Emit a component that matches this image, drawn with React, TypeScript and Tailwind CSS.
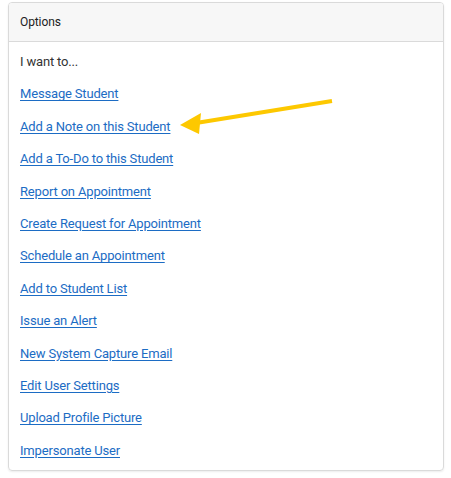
const links = [
  'Message Student',
  'Add a Note on this Student',
  'Add a To-Do to this Student',
  'Report on Appointment',
  'Create Request for Appointment',
  'Schedule an Appointment',
  'Add to Student List',
  'Issue an Alert',
  'New System Capture Email',
  'Edit User Settings',
  'Upload Profile Picture',
  'Impersonate User',
];

export default function App() {
  return (
    <div className="relative h-[478px] w-[451px] bg-white pt-[2px] font-['Roboto',sans-serif]">
      <div className="ml-[8px] w-[436px] overflow-hidden rounded-[4px] border border-[#dadada] shadow-[0_1px_2px_rgba(0,0,0,0.08)]">
        <div className="flex h-[39px] items-center border-b border-[#dadada] bg-[#f7f7f7] px-[11px] text-[12px] tracking-[-0.1px] text-[#222]">
          Options
        </div>
        <div className="flex flex-col gap-[12.4px] px-[11px] pb-[9px] pt-[10px] text-[13px] leading-[20px] tracking-[-0.17px]">
          <div className="text-[#333]">I want to...</div>
          {links.map((l) => (
            <div key={l}>
              <a href="#" className="text-[#1c6cc4] underline underline-offset-2">
                {l}
              </a>
            </div>
          ))}
        </div>
      </div>
      <svg className="pointer-events-none absolute left-0 top-0" width="451" height="478">
        <line x1="332" y1="101" x2="196" y2="123" stroke="#fdc800" strokeWidth="4" />
        <polygon points="180,125 201,113 199,134" fill="#fdc800" />
      </svg>
    </div>
  );
}
